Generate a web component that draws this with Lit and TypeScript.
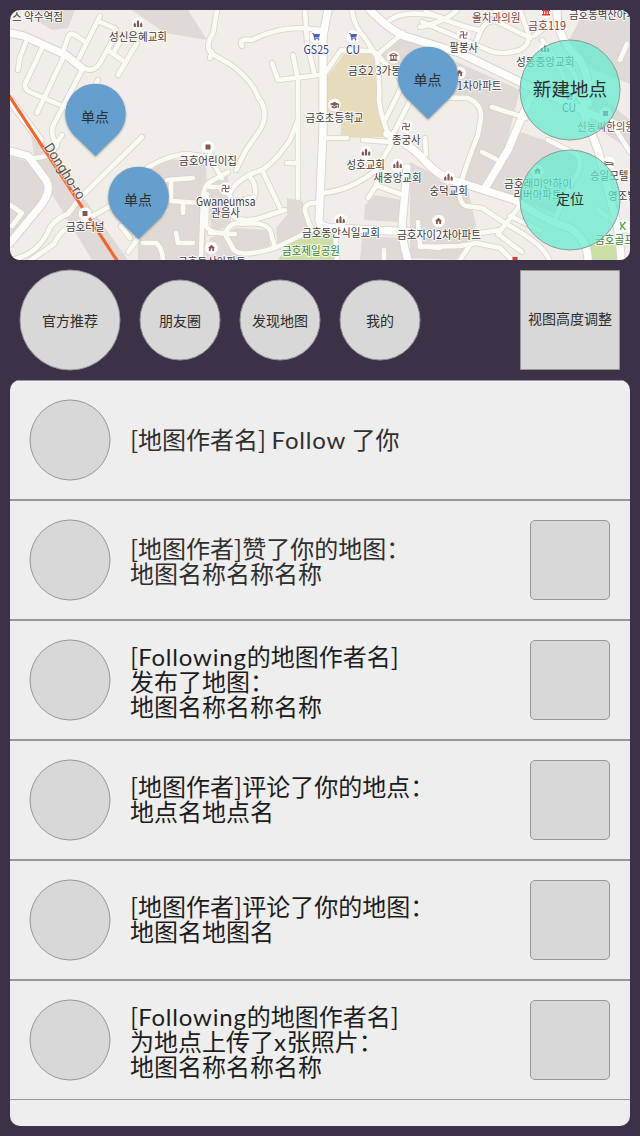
import { LitElement, html, svg, css } from "lit";
import { customElement } from "lit/decorators.js";

type Label = { t: string; x: number; y: number; w: number; c?: string };
type Icon = { k: string; x: number; y: number };

const GREY = [
  "M10 156 L32 163 L46 185 L40 205 L10 237Z",
  "M30 128 L42 140 L128 260 L92 260 L36 168Z",
  "M30 10 L75 10 L68 28 L52 30 L36 20Z",
  "M132 10 L188 10 L207 40 L165 33Z",
  "M142 174 L168 160 L206 158 L207 205 L205 260 L138 260 L138 240 L168 210Z",
  "M206 183 L228 176 L231 225 L212 233Z",
  "M210 238 L236 228 L270 230 L270 246 L240 253 L236 260 L204 260Z",
  "M287 198 L303 201 L306 220 L312 230 L278 247 L276 228 L287 215Z",
  "M375 195 L401 200 L401 222 L364 220 L365 205Z",
  "M362 236 L402 238 L404 260 L360 260Z",
  "M410 162 L430 172 L442 182 L468 190 L476 225 L466 245 L456 260 L410 258Z",
  "M378 52 L402 38 L430 50 L520 90 L505 150 L482 188 L464 180 L480 128 L480 108 L470 98 L428 92 L400 86Z",
  "M520 132 L574 150 L582 168 L560 215 L488 188Z",
  "M585 10 L630 10 L630 84 L590 68 L568 42Z",
  "M540 80 L600 95 L630 120 L630 150 L600 130 L580 112Z",
];

const THIN = [
  "M26 42 L20 57 L18 70", "M42 48 L25 84 Q24 89 30 92 L60 105", "M63 58 L37 113",
  "M63 52 L68 37 Q70 32 75 35 L84 41", "M100 16 L79 58", "M100 22 L114 28 Q118 31 115 36 L100 63 Q94 72 86 69",
  "M109 51 L125 62", "M137 43 L118 75", "M122 38 L114 52", "M98 80 L90 95",
  "M82 70 L54 124 Q49 132 57 146", "M64 105 L70 112",
  "M32 158 Q54 158 56 144 L62 135", "M142 137 L80 198 L68 214 Q52 220 48 232 Q36 256 10 260",
  "M112 205 L82 222 Q62 226 54 244 L28 262", "M138 174 Q165 155 187 154 L210 157",
  "M167 180 L193 178", "M171 180 L171 201 L200 203", "M183 203 L183 213",
  "M228 172 L210 182 Q203 186 203 200 L201 256", "M207 194 L206 225 Q208 234 235 234",
  "M143 243 L156 243 Q162 247 163 260", "M193 243 L178 243 L176 233", "M137 240 L128 252", "M121 226 L130 238",
  "M10 205 L22 213 L12 226", "M217 10 L213 34 Q204 46 212 54 L230 64 Q252 80 258 97 Q270 112 260 130 L246 150 L236 170",
  "M210 58 L212 52", "M242 46 Q238 38 252 40 Q275 28 300 28 L323 30", "M305 10 L307 43 L314 72",
  "M272 63 L278 80 L319 75", "M293 55 L298 80 L298 198", "M298 120 L290 140 Q275 162 262 170 Q236 178 229 195",
  "M287 163 L298 163", "M263 172 L280 208", "M250 177 Q258 186 254 198 L245 199",
  "M208 146 Q213 165 222 178", "M210 187 L225 187", "M230 195 L233 216 Q240 222 257 219 L285 210",
  "M210 233 L225 233 Q232 220 242 224 Q272 220 272 238 Q278 248 268 250 Q240 257 234 250 L226 236",
  "M318 203 Q304 202 305 211 Q308 222 312 230 L275 248",
  "M325 73 L341 50 L372 51 L379 55", "M352 10 Q354 27 365 38 L377 57 Q380 80 379 100 Q381 118 390 138",
  "M403 33 L377 55", "M377 55 L400 78", "M390 20 Q405 9 440 17", "M403 84 L385 120", "M413 95 L391 138",
  "M323 138 L347 138", "M363 140 L390 142", "M392 143 L376 170 Q352 190 323 193", "M380 172 L376 186 L368 198",
  "M378 186 L403 195", "M420 27 Q445 22 457 10", "M426 12 Q470 30 481 30 Q488 18 498 22 L528 37 Q530 44 520 50 Q500 56 488 50 L422 22",
  "M481 30 L476 42", "M485 17 L500 10", "M520 10 L530 38", "M534 36 L548 25", "M425 138 L426 155",
  "M420 97 L468 98 Q482 104 481 118 L478 135 Q466 165 462 180 Q456 202 466 206 L482 208 L508 225 Q545 245 550 262",
  "M492 107 L526 118", "M482 152 L496 159", "M518 208 L498 234 L522 252", "M480 233 L500 230", "M420 247 L460 246 L476 243 L500 248 L512 260",
  "M470 245 L460 260", "M510 216 L540 230", "M548 140 L578 155 Q584 168 572 182 L556 217", "M627 44 L620 60",
  "M610 120 L630 152", "M598 210 L630 232", "M418 222 L420 246 L440 248", "M335 228 L337 260", "M384 250 L384 260",
  "M560 60 Q580 72 578 95 L588 112", "M542 40 Q560 64 566 84 L590 104",
];

const WIDE = [
  "M10 33 L24 36 L66 55 L82 68", "M10 151 L28 156 L46 180 Q52 190 42 204 L10 243", "M10 100 L40 140",
  "M328 10 L323 36 L323 130 L319 220 Q320 228 336 228 L410 232 L440 236",
  "M370 10 Q390 30 404 36 L460 53 L520 82 Q570 105 605 120 L630 130",
  "M387 134 Q412 145 426 162 Q440 178 462 183 L515 200 Q548 222 570 228 Q588 240 588 260",
  "M407 168 L403 215 Q400 235 408 260", "M530 98 L508 150 L484 190", "M557 10 Q556 38 580 60 Q596 90 582 108 L598 150 L612 205 Q620 230 621 260",
];

const LABELS: Label[] = [
  { t: "스 약수역점", x: 12, y: 20.5, w: 51 }, { t: "성신은혜교회", x: 109, y: 41, w: 58 },
  { t: "GS25", x: 303.5, y: 53.5, w: 25.5, c: "shop" }, { t: "CU", x: 346, y: 53.5, w: 14, c: "shop" },
  { t: "금호2 3가동", x: 348, y: 74.5, w: 53 }, { t: "금호초등학교", x: 305.5, y: 122, w: 58 },
  { t: "종궁사", x: 392, y: 143.5, w: 28.5 }, { t: "성호교회", x: 346.5, y: 169, w: 38.5 },
  { t: "새중앙교회", x: 373.5, y: 181.5, w: 48 }, { t: "숭덕교회", x: 429.5, y: 194.5, w: 38.5 },
  { t: "금호어린이집", x: 179, y: 164.5, w: 58 }, { t: "Gwaneumsa", x: 196, y: 206, w: 59.5 },
  { t: "관음사", x: 211, y: 216.5, w: 29 }, { t: "금호터널", x: 66, y: 231, w: 38.5 },
  { t: "금호동산아파트", x: 178, y: 265.5, w: 68 }, { t: "금호동안식일교회", x: 302, y: 237, w: 78 },
  { t: "금호제일공원", x: 282, y: 255, w: 58, c: "park" }, { t: "금호자이2차아파트", x: 397, y: 238.5, w: 84 },
  { t: "올치과의원", x: 472, y: 22, w: 48.5, c: "med" }, { t: "금호119", x: 528, y: 30, w: 38, c: "med" },
  { t: "금호동벽산아파", x: 569, y: 18.5, w: 67 }, { t: "팔봉사", x: 449.5, y: 52, w: 28.5 },
  { t: "성동중앙교회", x: 516, y: 66, w: 58.5 }, { t: "1차아파트", x: 457, y: 90, w: 44.5 },
  { t: "CU", x: 562, y: 112, w: 14, c: "shop" }, { t: "신농씨한의원", x: 577, y: 131, w: 58, c: "med" },
  { t: "금호래미안하이", x: 504, y: 188, w: 68 }, { t: "리버아파트", x: 513.5, y: 198.5, w: 48 },
  { t: "승일모텔", x: 590, y: 180, w: 38.5 }, { t: "영조빌", x: 608, y: 199.5, w: 29 },
  { t: "금호골프", x: 595, y: 243.5, w: 39, c: "park" },
];

const ICONS: Icon[] = [
  { k: "church", x: 138, y: 24 }, { k: "cart", x: 316, y: 36.5 }, { k: "cart", x: 353, y: 36.5 },
  { k: "hall", x: 393.5, y: 57 }, { k: "school", x: 334.5, y: 105 }, { k: "temple", x: 406, y: 126.5 },
  { k: "church", x: 366, y: 152.5 }, { k: "church", x: 397.5, y: 165 }, { k: "church", x: 448.5, y: 177.5 },
  { k: "dot", x: 208, y: 147 }, { k: "temple", x: 225.5, y: 188.5 }, { k: "dot", x: 85, y: 213.5 },
  { k: "house", x: 211.5, y: 248 }, { k: "church", x: 340.5, y: 220 }, { k: "house", x: 438.5, y: 221 },
  { k: "temple", x: 463.5, y: 35 }, { k: "house", x: 459.5, y: 73 }, { k: "church", x: 545, y: 49 },
  { k: "fire", x: 546, y: 12 }, { k: "cart", x: 569, y: 96 }, { k: "dot", x: 605.5, y: 113.5 },
  { k: "house", x: 537.5, y: 171 }, { k: "bed", x: 609, y: 163 }, { k: "golf", x: 623, y: 226 },
];

const GLYPHS: Record<string, unknown> = {
  church: svg`<path class="brown" d="M-1.1 3V-2.5L0-4.2L1.1-2.5V3ZM-4.3 3V0L-3.2-1.5L-2.1 0V3ZM2.1 3V0L3.2-1.5L4.3 0V3Z"/>`,
  cart: svg`<path class="blue" d="M-4-3.5H-2.4L-2-2.6H4L3.2 1H-1.4L-1.2 1.8H3.2V2.4H-1.8L-2.9-2.7H-4Z"/><circle class="blue" cx="-1" cy="3.2" r=".8"/><circle class="blue" cx="2.6" cy="3.2" r=".8"/>`,
  hall: svg`<path class="brown-line" d="M-4-1.6L0-3.8L4-1.6ZM-4 3.4H4M-3 2.4H3M-2.5-1V2.5M0-1V2.5M2.5-1V2.5"/>`,
  school: svg`<path class="brown" d="M0-3L5-1L0 1L-5-1ZM-2.8 .6L0 1.8L2.8 .6V2.6Q0 4.2-2.8 2.6Z"/><path class="brown-line" d="M4-1V3"/>`,
  temple: svg`<path class="brown-line" d="M3.4-3.2V0H-3.4V3.4M0-3.4V3.4M0-3.2H-3.4M0 3.2H3.4"/>`,
  dot: svg`<rect class="brown" x="-2.5" y="-2.5" width="5" height="5"/>`,
  house: svg`<path class="brown" d="M0-3.2L3.5 0H2.6V3H.8V.6H-.8V3H-2.6V0H-3.5Z"/>`,
  fire: svg`<path class="red" d="M-4-3H4V-1H3V2H4V3.5H-4V2H-3V-1H-4Z"/><path class="white-line" d="M-1.3-.6V2M1.3-.6V2"/>`,
  bed: svg`<path class="brown-line" d="M-4-2V3M-4 1.5H4V3M-3-.5H0L4 0V1.5"/>`,
  golf: svg`<path class="green-line" d="M-2.5-4L-1.5 0L-2.5 4M2-3.5L-1 0L2.5 4M1-3.5H3"/>`,
};

@customElement("map-view")
class MapView extends LitElement {
  static styles = css`
    :host { display: block; height: 250px; border-radius: 10px; overflow: hidden; }
    svg { display: block; }
    .land { fill: #f1ede8; }
    .grey { fill: #dfdad6; }
    .beige { fill: #e6dcbb; }
    .park-area { fill: #cbdfa6; }
    .road path { fill: none; stroke-linecap: round; stroke-linejoin: round; }
    .thin-case { stroke: #d9d2ca; stroke-width: 6.2; }
    .wide-case { stroke: #d9d2ca; stroke-width: 9.2; }
    .thin { stroke: #fbfbf6; stroke-width: 4.6; }
    .wide { stroke: #fdfdfc; stroke-width: 7.4; }
    .highway { stroke: #f9632c; stroke-width: 3.2; fill: none; }
    .label {
      font: 400 11.6px "Noto Sans CJK KR", sans-serif; fill: #3f3a37;
      stroke: #fff; stroke-opacity: .8; stroke-width: 2.2px; stroke-linejoin: round; paint-order: stroke;
    }
    .shop { fill: #343b80; }
    .med { fill: #7d423f; }
    .park { fill: #3c8030; }
    .street { font: 400 14px Roboto, sans-serif; fill: #5a5543; stroke: #fff; stroke-opacity: .6; stroke-width: 2px; paint-order: stroke; }
    .disc { fill: #fff; }
    .brown { fill: #82584f; }
    .blue { fill: #4a5cc0; }
    .red { fill: #e5382d; }
    .brown-line { fill: none; stroke: #82584f; stroke-width: 1; }
    .white-line { fill: none; stroke: #fff; stroke-width: 1; }
    .green-line { fill: none; stroke: #58a83c; stroke-width: 1.3; }
    .pin { fill: #649fce; filter: drop-shadow(0 1px 1px rgba(0, 0, 0, .35)); }
    .action { fill: #62ebcd; fill-opacity: .72; stroke: #8a9a97; }
    .caption { font: 400 14px "Noto Sans CJK SC", sans-serif; fill: #2d2d2d; text-anchor: middle; }
    .big { font-size: 18.6px; }
  `;

  private pin(x: number, y: number) {
    return svg`
      <path class="pin" d="M${x} ${y + 42}L${x - 22.5} ${y + 20}A30.2 30.2 0 1 1 ${x + 22.5} ${y + 20}Z"/>
      <text class="caption" x=${x - 0.5} y=${y + 7.5}>单点</text>`;
  }

  render() {
    return html`<svg width="620" height="250" viewBox="10 10 620 250">
      <rect class="land" x="10" y="10" width="620" height="250" />
      ${GREY.map((d) => svg`<path class="grey" d=${d}/>`)}
      <path class="beige" d="M344 54H376L379 88L386 137L341 138V115H326V78Z" />
      <path class="park-area" d="M278 260L290 244L313 226L335 231V260Z" />
      <path class="park-area" d="M591 245H618V260H591Z" />
      <g class="road">
        ${THIN.map((d) => svg`<path class="thin-case" d=${d}/>`)}
        ${WIDE.map((d) => svg`<path class="wide-case" d=${d}/>`)}
        ${THIN.map((d) => svg`<path class="thin" d=${d}/>`)}
        ${WIDE.map((d) => svg`<path class="wide" d=${d}/>`)}
      </g>
      <path class="highway" d="M8 94L118 262" />
      <rect class="red" x="512.5" y="257" width="5" height="4" />
      ${ICONS.map((i) => svg`<g transform="translate(${i.x} ${i.y})"><circle class="disc" r="6.3"/>${GLYPHS[i.k]}</g>`)}
      ${LABELS.map((l) => svg`<text class="label ${l.c ?? ""}" x=${l.x} y=${l.y} textLength=${l.w} lengthAdjust="spacingAndGlyphs">${l.t}</text>`)}
      <text class="street" transform="translate(43.5 147) rotate(57)" textLength="64" lengthAdjust="spacingAndGlyphs">Dongho-ro</text>
      ${this.pin(95.5, 114)} ${this.pin(138.5, 197)} ${this.pin(428, 77)}
      <circle class="action" cx="570" cy="90" r="50" />
      <text class="caption big" x="570" y="95.5">新建地点</text>
      <circle class="action" cx="570" cy="200" r="50" />
      <text class="caption" x="570" y="203.5">定位</text>
    </svg>`;
  }
}

@customElement("filter-bar")
class FilterBar extends LitElement {
  static styles = css`
    :host { display: flex; align-items: center; height: 120px; padding: 0 10px 0 9px; font: 400 14px/20px "Noto Sans CJK SC", sans-serif; color: #2d2d2d; }
    .tab { display: grid; place-items: center; margin-right: 18px; }
    .tab > * { grid-area: 1 / 1; }
    svg { display: block; }
    circle { fill: #d8d8d8; stroke: #979797; }
    .resize { box-sizing: border-box; width: 100px; height: 100px; margin-left: auto; border: 1px solid #979797; background: #d8d8d8; display: grid; place-items: center; white-space: nowrap; padding-bottom: 4px; }
  `;

  private tab(label: string, r: number) {
    const size = r * 2 + 2;
    return html`<div class="tab">
      <svg width=${size} height=${size}><circle cx=${r + 1} cy=${r + 1} r=${r}></circle></svg>
      <span>${label}</span>
    </div>`;
  }

  render() {
    return html`${this.tab("官方推荐", 50)}${this.tab("朋友圈", 40)}${this.tab("发现地图", 40)}${this.tab("我的", 40)}
      <div class="resize">视图高度调整</div>`;
  }
}

type Line = { a: string; latin?: string; b?: string };
type Notice = { lines: Line[]; thumb: boolean; tone: string };

const NOTICES: Notice[] = [
  { lines: [{ a: "[地图作者名] ", latin: "Follow", b: " 了你" }], thumb: false, tone: "soft up" },
  { lines: [{ a: "[地图作者]赞了你的地图：" }, { a: "地图名称名称名称" }], thumb: true, tone: "soft" },
  { lines: [{ a: "[", latin: "Following", b: "的地图作者名]" }, { a: "发布了地图：" }, { a: "地图名称名称名称" }], thumb: true, tone: "" },
  { lines: [{ a: "[地图作者]评论了你的地点：" }, { a: "地点名地点名" }], thumb: true, tone: "up" },
  { lines: [{ a: "[地图作者]评论了你的地图：" }, { a: "地图名地图名" }], thumb: true, tone: "up" },
  { lines: [{ a: "[", latin: "Following", b: "的地图作者名]" }, { a: "为地点上传了", latin: "x", b: "张照片：" }, { a: "地图名称名称名称" }], thumb: true, tone: "" },
];

@customElement("notice-list")
class NoticeList extends LitElement {
  static styles = css`
    :host { display: block; flex: 1; background: #eee; border-radius: 10px; overflow: hidden; }
    .row { box-sizing: border-box; height: 120px; display: flex; align-items: center; padding: 0 20px 0 19px; border: solid #979797; border-width: 1px 0; }
    svg { display: block; flex: none; }
    circle { fill: #d8d8d8; stroke: #979797; }
    .text { flex: 1; margin-left: 19px; font: 400 24px/25px "Noto Sans CJK SC", sans-serif; color: #1d1d1d; white-space: pre; }
    .line { height: 25px; }
    .soft { color: #2f2f2f; }
    .up { padding-bottom: 4px; }
    .latin { font-family: Lato, sans-serif; line-height: 1; letter-spacing: .8px; }
    .thumb { box-sizing: border-box; width: 80px; height: 80px; border: 1px solid #979797; border-radius: 5px; background: #d8d8d8; }
  `;

  render() {
    return NOTICES.map((n) => html`<div class="row">
      <svg width="82" height="82"><circle cx="41" cy="41" r="40"></circle></svg>
      <div class="text ${n.tone}">${n.lines.map((l) => html`<div class="line">${l.a}${l.latin ? html`<span class="latin">${l.latin}</span>` : ""}${l.b ?? ""}</div>`)}</div>
      ${n.thumb ? html`<div class="thumb"></div>` : ""}
    </div>`);
  }
}

@customElement("app-root")
class AppRoot extends LitElement {
  static styles = css`
    :host { display: flex; flex-direction: column; box-sizing: border-box; width: 640px; height: 1136px; padding: 10px; background: #3b3247; overflow: hidden; }
  `;

  render() {
    return html`<map-view></map-view><filter-bar></filter-bar><notice-list></notice-list>`;
  }
}
